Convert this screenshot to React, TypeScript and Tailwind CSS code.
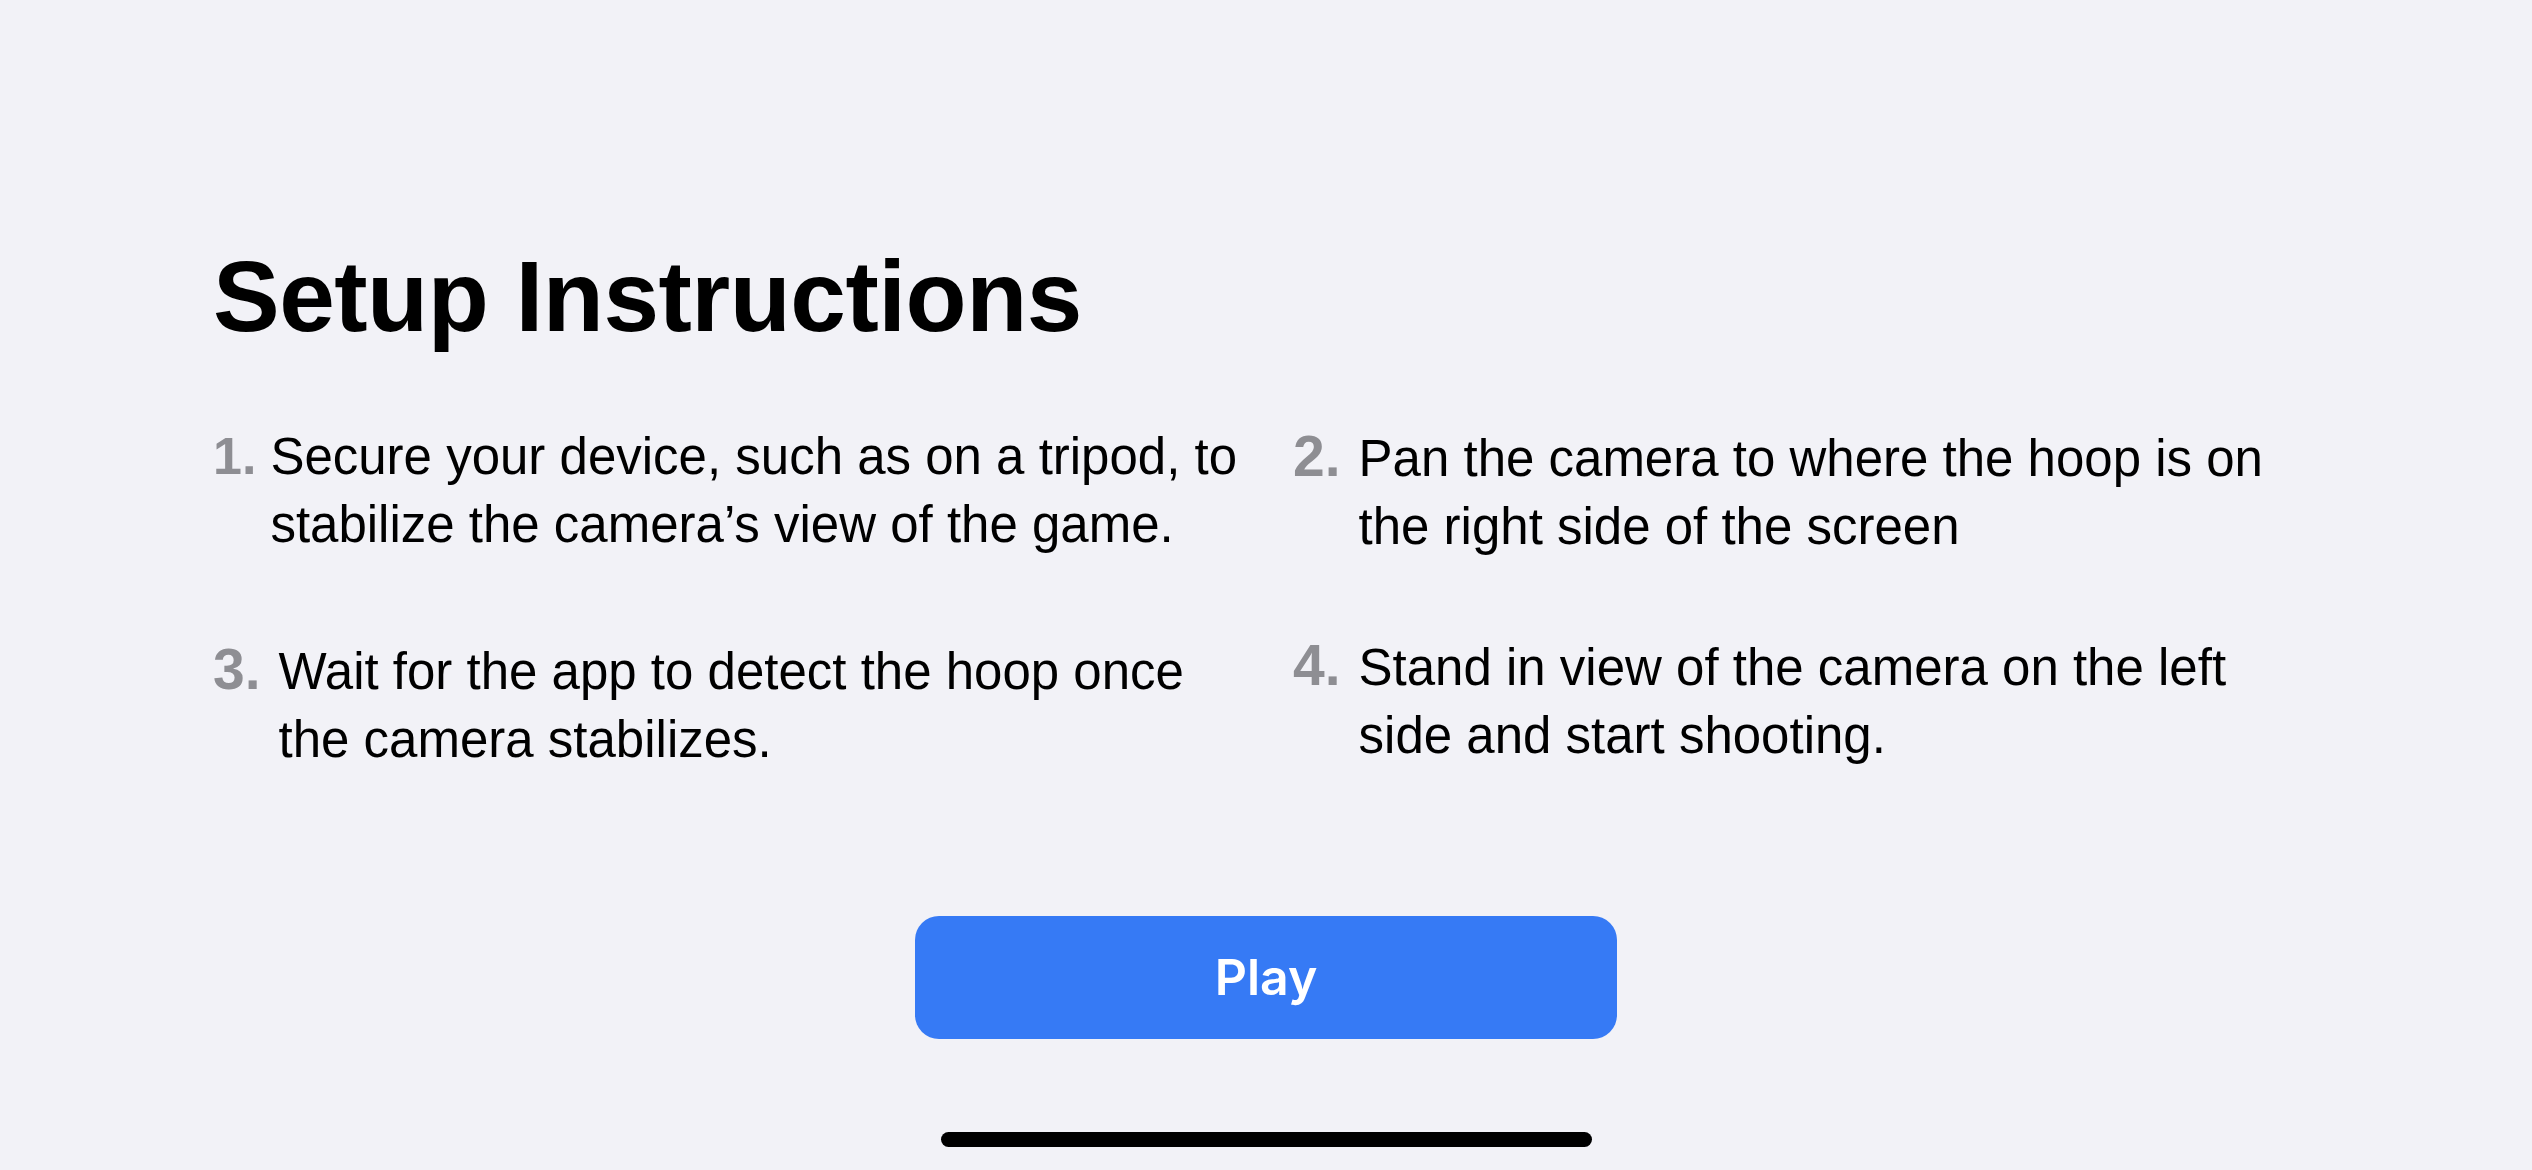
import React from "react";

type Item = { n: string; lines: string[]; big?: boolean; gap: string };

const left: Item[] = [
  { n: "1.", lines: ["Secure your device, such as on a tripod, to", "stabilize the camera’s view of the game."], gap: "gap-[14px]" },
  { n: "3.", lines: ["Wait for the app to detect the hoop once", "the camera stabilizes."], big: true, gap: "gap-[18px]" },
];
const right: Item[] = [
  { n: "2.", lines: ["Pan the camera to where the hoop is on", "the right side of the screen"], big: true, gap: "gap-[18px]" },
  { n: "4.", lines: ["Stand in view of the camera on the left", "side and start shooting."], big: true, gap: "gap-[18px]" },
];

function Step({ item }: { item: Item }) {
  return (
    <div className={`flex items-baseline ${item.gap}`}>
      <span
        className={`font-bold text-[#8E8E93] leading-[68px] ${item.big ? "text-[57px]" : "text-[52px]"}`}
      >
        {item.n}
      </span>
      <p className="text-[51px] leading-[68px] text-black whitespace-nowrap">
        {item.lines[0]}
        <br />
        {item.lines[1]}
      </p>
    </div>
  );
}

export default function App() {
  return (
    <div
      className="w-[2532px] h-[1170px] bg-[#F2F2F7] flex flex-col overflow-hidden"
      style={{ fontFamily: '"Liberation Sans", Arial, sans-serif' }}
    >
      <div className="pl-[213px] pt-[246px]">
        <h1 className="text-[100px] leading-[100px] font-bold tracking-[-0.5px] text-black">
          Setup Instructions
        </h1>
        <div className="mt-[76px] grid grid-cols-[1080px_1fr] gap-y-[70px]">
          <Step item={left[0]} />
          <Step item={right[0]} />
          <div className="pt-[4px]">
            <Step item={left[1]} />
          </div>
          <Step item={right[1]} />
        </div>
      </div>
      <div className="mt-[142px] flex justify-center">
        <button
          className="w-[702px] h-[123px] rounded-[24px] bg-[#367AF5] text-white text-[50px] font-semibold flex items-center justify-center"
          style={{ fontFamily: 'Inter, "Liberation Sans", sans-serif' }}
        >
          Play
        </button>
      </div>
      <div className="mt-[93px] flex justify-center">
        <div className="w-[651px] h-[15px] rounded-full bg-black" />
      </div>
    </div>
  );
}
